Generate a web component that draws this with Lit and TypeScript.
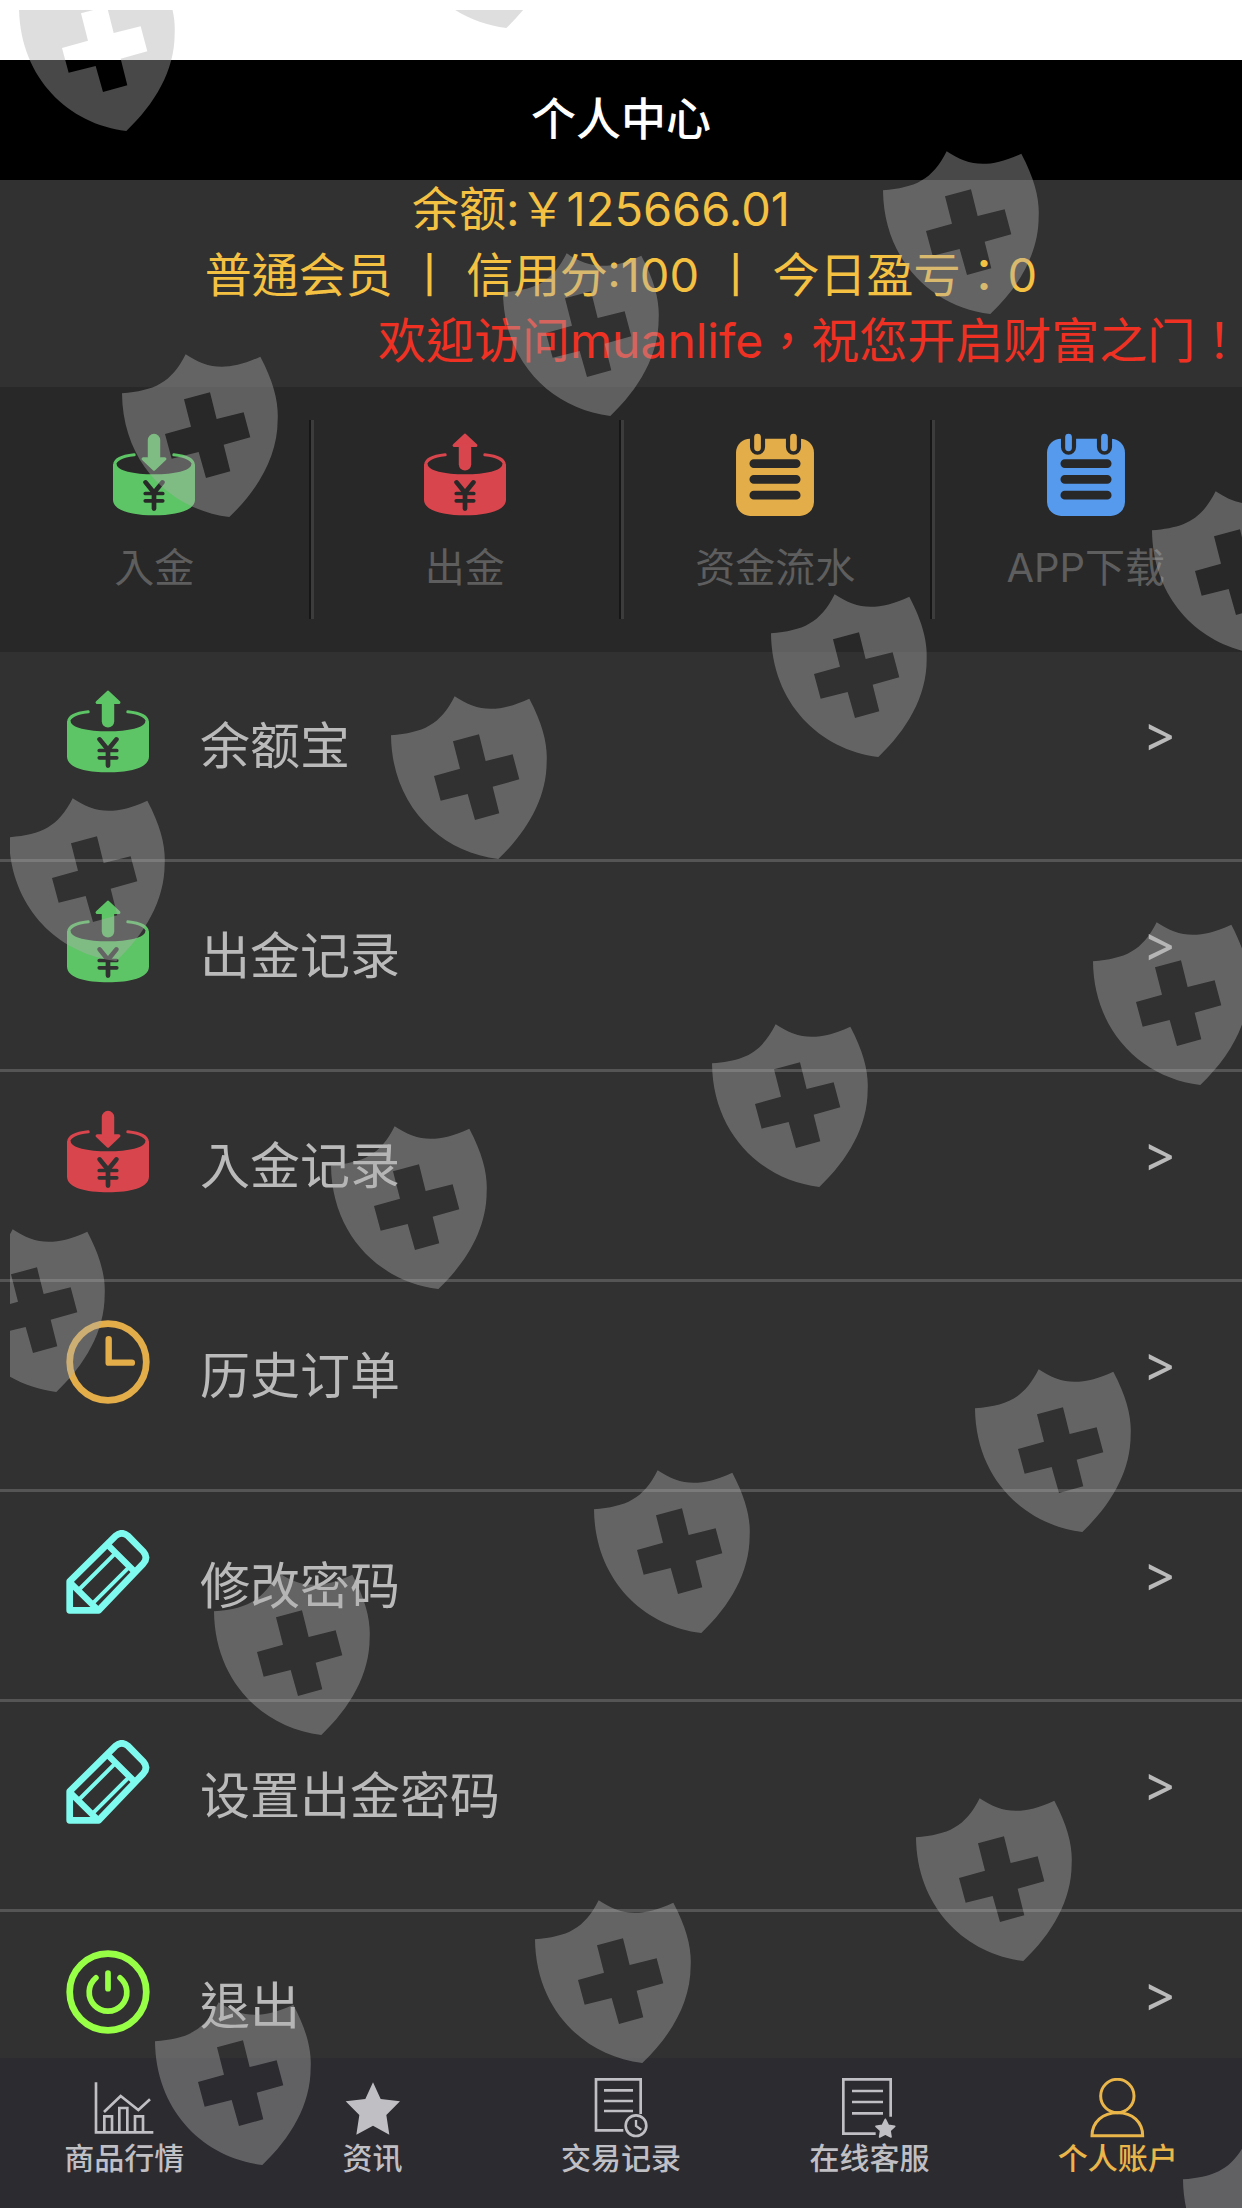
import { LitElement, html, svg, css } from "lit";
import { customElement, property } from "lit/decorators.js";

type IconName =
  | "deposit" | "withdraw" | "notepad" | "clock" | "pencil" | "power"
  | "chart" | "star" | "docClock" | "docStar" | "user";

const bucket = svg`
  <path fill="currentColor" d="M3 95 Q4 90 14 93 C14 112 65 123 125 123 S236 112 236 93 Q246 90 247 95 V198 C247 232 190 245 125 245 S3 232 3 198 Z"/>
  <path class="line" stroke-width="9" d="M8 95 C8 80 30 69 66 65 M242 95 C242 80 220 69 184 65"/>
  <path class="cut" stroke-width="14" d="M100 147 L125 178 L150 147 M125 178 V225"/>
  <path class="cut" stroke-width="11" d="M99 180 H151 M99 202 H151"/>`;

const arrow = svg`
  <path class="line" stroke-width="37" d="M125 21 V70"/>
  <path fill="currentColor" stroke="currentColor" stroke-width="10" stroke-linejoin="round" d="M93 77 H157 L125 107 Z"/>`;

const icons: Record<IconName, { box: number; art: unknown }> = {
  deposit: { box: 250, art: svg`${bucket}${arrow}` },
  withdraw: { box: 250, art: svg`${bucket}<g transform="translate(0 114) scale(1 -1)">${arrow}</g>` },
  notepad: {
    box: 250,
    art: svg`
      <rect x="9" y="17" width="232" height="230" rx="42" fill="currentColor"/>
      <path class="cut" stroke-width="45" d="M73 -30 V42 M180 -30 V42"/>
      <path class="line" stroke-width="20" d="M73 12 V44 M180 12 V44"/>
      <path class="cut" stroke-width="26" d="M62 91 H188 M62 138 H188 M62 185 H188"/>`,
  },
  clock: {
    box: 250,
    art: svg`<circle class="line" stroke-width="20" cx="125" cy="125" r="114"/>
      <path class="line" stroke-width="19" d="M127 57 V127 H196"/>`,
  },
  pencil: {
    box: 250,
    art: svg`
      <path class="line" stroke-width="20" d="M11 239 V153 L147 18 Q166 2 185 18 L230 64 Q246 82 230 100 L97 239 Z"/>
      <path class="line" stroke-width="19" d="M126 46 L200 120 M16 160 L92 235"/>
      <path class="line" stroke-width="12" d="M36 180 L142 74 M78 220 L184 114"/>`,
  },
  power: {
    box: 250,
    art: svg`<circle class="line" stroke-width="20" cx="125" cy="125" r="114"/>
      <path class="line" stroke-width="17" d="M89 83 A56 56 0 1 0 161 83 M125 69 V115"/>`,
  },
  chart: {
    box: 180,
    art: svg`<path class="sharp" stroke-width="8" d="M6 13 V163 H178 M31 163 V115 H54 V163 M76 163 V90 H100 V163 M123 163 V115 H147 V163 M30 102 L80 54 L133 96 L168 64"/>`,
  },
  star: {
    box: 180,
    art: svg`<path fill="currentColor" d="M90 13 L113 63 L171 70 L130 111 L139 170 L90 143 L40 170 L49 111 L8 70 L67 63 Z"/>`,
  },
  docClock: {
    box: 180,
    art: svg`<path class="sharp" stroke-width="8" d="M149 108 V4 H15 V157 H97 M39 37 H126 M39 69 H126 M39 99 H126"/>
      <circle class="sharp" stroke-width="8" cx="135" cy="143" r="31"/>
      <path class="sharp" stroke-width="7" d="M135 126 V144 L151 155"/>`,
  },
  docStar: {
    box: 180,
    art: svg`<path class="sharp" stroke-width="8" d="M155 116 V4 H13 V167 H110 M39 39 H132 M39 72 H132 M39 106 H132"/>
      <path fill="currentColor" stroke="currentColor" stroke-width="5" stroke-linejoin="round" d="M139 124 L148 142 L167 145 L153 158 L156 177 L139 168 L122 177 L125 158 L111 145 L130 142 Z"/>`,
  },
  user: {
    box: 180,
    art: svg`<circle class="sharp" stroke-width="9" cx="88" cy="54" r="50"/>
      <path class="sharp" stroke-width="9" d="M12 173 C12 132 44 104 89 104 S164 132 164 173 Z"/>`,
  },
};

@customElement("app-icon")
class AppIcon extends LitElement {
  @property() name: IconName = "star";

  static styles = css`
    :host { display: block; flex: none; }
    .glyph { display: block; width: 100%; height: 100%; }
    .line { fill: none; stroke: currentColor; stroke-linecap: round; stroke-linejoin: round; }
    .sharp { fill: none; stroke: currentColor; }
    .cut { fill: none; stroke: var(--surface, #313131); stroke-linecap: round; }
  `;

  render() {
    const icon = icons[this.name];
    return html`<svg class="glyph" viewBox="0 0 ${icon.box} ${icon.box}" aria-hidden="true">${icon.art}</svg>`;
  }
}

/* Left edge and tip of every shield, measured from the page corner. */
const shields = [
  [19, 131], [399, 28], [883, 314], [503, 416], [122, 517],
  [1152, 654], [771, 757], [391, 859], [9, 961],
  [1093, 1085], [712, 1187], [331, 1289], [-51, 1392],
  [975, 1532], [594, 1633], [214, 1735],
  [916, 1961], [535, 2063], [155, 2165], [1183, 2303],
];

@customElement("shield-overlay")
class ShieldOverlay extends LitElement {
  static styles = css`
    :host { display: block; overflow: hidden; }
    .field { display: block; width: 100%; height: 100%; }
    .shield { fill: #b0b0b0; fill-opacity: 0.41; fill-rule: evenodd; }
  `;

  render() {
    return html`<svg class="field" aria-hidden="true">
      ${shields.map(
        ([x, y]) => svg`<path class="shield" transform="translate(${x - 10} ${y - 10}) scale(0.3333)"
          d="M0 -371 C97 -379 147 -401 191 -488 C257 -443 317 -436 415 -481 C457 -401 470 -341 467 -291 C467 -181 407 -81 322 0 C147 -21 2 -161 0 -371 Z
          M186 -353 L264 -374 L284 -294 L365 -314 L385 -239 L305 -217 L325 -137 L252 -117 L230 -195 L149 -175 L129 -249 L207 -271 Z"/>`,
      )}
    </svg>`;
  }
}

const actions: { icon: IconName; tone: string; label: string }[] = [
  { icon: "deposit", tone: "green", label: "入金" },
  { icon: "withdraw", tone: "red", label: "出金" },
  { icon: "notepad", tone: "gold", label: "资金流水" },
  { icon: "notepad", tone: "blue", label: "APP下载" },
];

const rows: { icon: IconName; tone: string; label: string }[] = [
  { icon: "withdraw", tone: "green", label: "余额宝" },
  { icon: "withdraw", tone: "green", label: "出金记录" },
  { icon: "deposit", tone: "red", label: "入金记录" },
  { icon: "clock", tone: "gold", label: "历史订单" },
  { icon: "pencil", tone: "cyan", label: "修改密码" },
  { icon: "pencil", tone: "cyan", label: "设置出金密码" },
  { icon: "power", tone: "lime", label: "退出" },
];

const tabs: { icon: IconName; label: string; current?: boolean }[] = [
  { icon: "chart", label: "商品行情" },
  { icon: "star", label: "资讯" },
  { icon: "docClock", label: "交易记录" },
  { icon: "docStar", label: "在线客服" },
  { icon: "user", label: "个人账户", current: true },
];

@customElement("app-root")
class AppRoot extends LitElement {
  static styles = css`
    :host {
      position: relative;
      display: flex;
      flex-direction: column;
      height: 100vh;
      overflow: hidden;
      background: #313131;
      font-family: Inter, "Noto Sans CJK TC", sans-serif;
    }
    a { color: inherit; text-decoration: none; }
    .status { flex: none; height: 60px; background: #fff; }
    .bar {
      flex: none;
      display: flex;
      align-items: center;
      justify-content: center;
      height: 120px;
      background: #000;
      color: #fff;
    }
    .title { margin: 0; font-size: 45px; line-height: 60px; font-weight: 500; }
    .content { flex: 1; min-height: 0; overflow-y: auto; scrollbar-width: none; }
    .account {
      display: flex;
      flex-direction: column;
      justify-content: center;
      height: 190px;
      padding-bottom: 17px;
      color: #f5c142;
      font-size: 47px;
      line-height: 66px;
      text-align: center;
      white-space: nowrap;
    }
    .account p { flex: none; margin: 0; }
    .account .balance { padding-right: 40px; }
    .account .notice { padding-left: 378px; color: #ef3124; text-align: left; font-size: 48px; }
    .actions {
      --surface: #282828;
      display: grid;
      grid-template-columns: repeat(4, 1fr);
      padding: 33px 0;
      background: #282828;
    }
    .action {
      box-sizing: border-box;
      display: flex;
      flex-direction: column;
      align-items: center;
      gap: 21px;
      height: 199px;
      padding: 13px 2px 0 0;
      color: #5e5e5e;
      font-size: 40px;
      line-height: 60px;
    }
    .action + .action { box-shadow: inset 3px 0 #3c3c3c, -2px 0 #161616; }
    .figure { width: 84px; height: 84px; }
    .green { color: #5ec566; }
    .red { color: #d9454c; }
    .gold { color: #e3ad4a; }
    .blue { color: #569aee; }
    .cyan { color: #7ffaee; }
    .lime { color: #97ff45; }
    .menu { margin: 0; padding: 0; list-style: none; }
    .row {
      box-sizing: border-box;
      display: flex;
      align-items: flex-start;
      gap: 50px;
      height: 210px;
      padding: 38px 66px 0;
      border-bottom: 3px solid #555;
      color: #bababa;
    }
    .name { flex: 1; font-size: 50px; line-height: 112px; }
    .more { font-size: 50px; line-height: 86px; }
    .tabs {
      flex: none;
      display: grid;
      grid-template-columns: repeat(5, 1fr);
      height: 150px;
      background: #2c2b30;
      color: #c0bfc4;
    }
    .tab {
      display: flex;
      flex-direction: column;
      align-items: center;
      padding-top: 20px;
      font-size: 30px;
      line-height: 40px;
      font-weight: 500;
    }
    .current { color: #eab64a; }
    .mark { width: 60px; height: 60px; }
    .shields { position: absolute; inset: 10px 0 0 10px; pointer-events: none; }
  `;

  render() {
    return html`
      <div class="status"></div>
      <header class="bar"><h1 class="title">个人中心</h1></header>
      <main class="content">
        <section class="account">
          <p class="balance">余额:￥125666.01</p>
          <p>普通会员 丨 信用分:100 丨 今日盈亏：0</p>
          <p class="notice">欢迎访问muanlife，祝您开启财富之门！</p>
        </section>
        <nav class="actions">
          ${actions.map(
            (a) => html`<a class="action" href="#">
              <app-icon class="figure ${a.tone}" name=${a.icon}></app-icon>
              <span>${a.label}</span>
            </a>`,
          )}
        </nav>
        <ul class="menu">
          ${rows.map(
            (r) => html`<li>
              <a class="row" href="#">
                <app-icon class="figure ${r.tone}" name=${r.icon}></app-icon>
                <span class="name">${r.label}</span>
                <span class="more">&gt;</span>
              </a>
            </li>`,
          )}
        </ul>
      </main>
      <nav class="tabs">
        ${tabs.map(
          (t) => html`<a class="tab ${t.current ? "current" : ""}" href="#">
            <app-icon class="mark" name=${t.icon}></app-icon>
            <span>${t.label}</span>
          </a>`,
        )}
      </nav>
      <shield-overlay class="shields"></shield-overlay>
    `;
  }
}
